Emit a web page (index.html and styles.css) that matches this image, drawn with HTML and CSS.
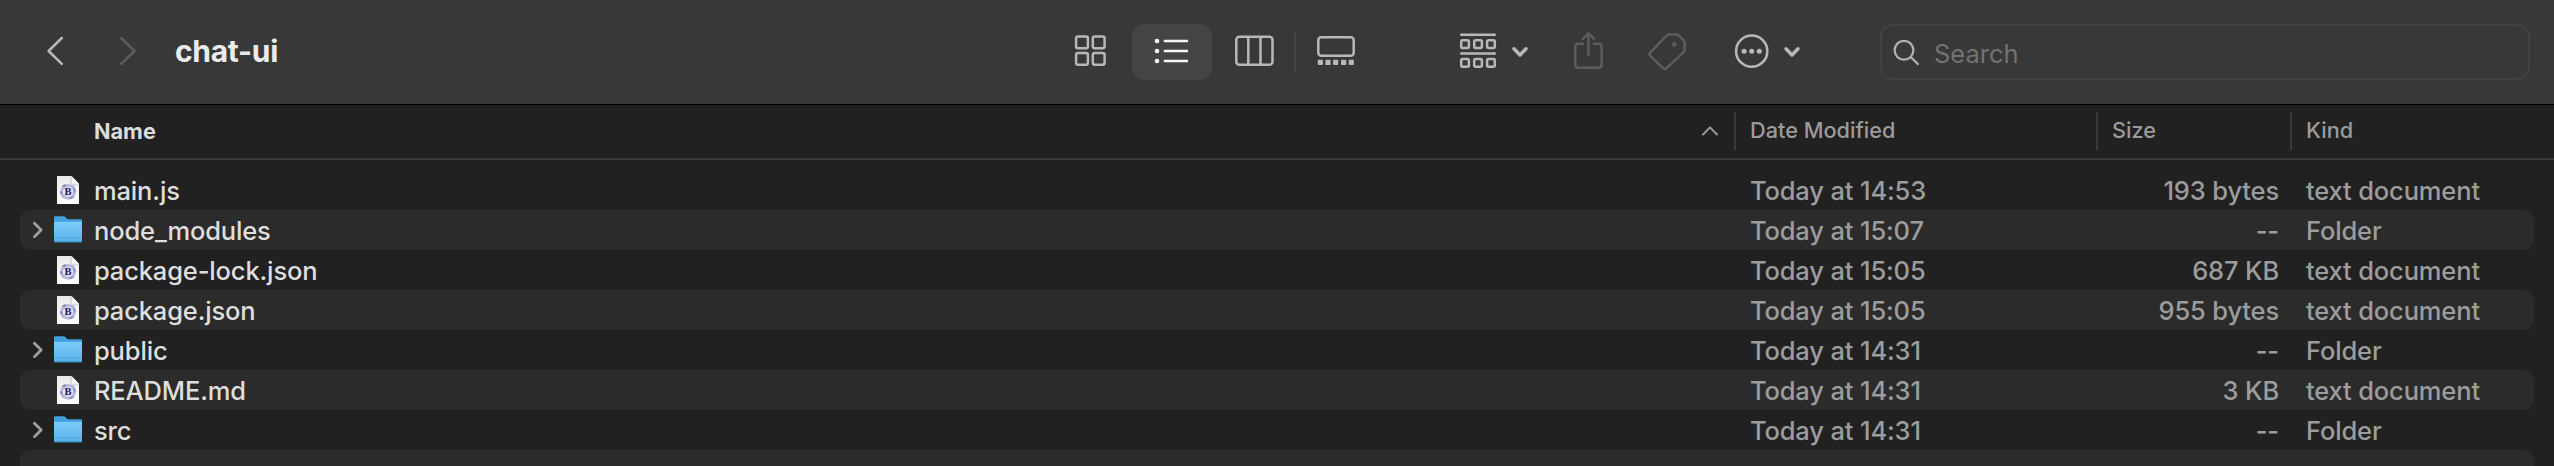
FILE: index.html
```html
<!DOCTYPE html>
<html lang="en">
<head>
<meta charset="utf-8">
<title>chat-ui</title>
<link rel="stylesheet" href="styles.css">
</head>
<body>
<svg class="defs" width="0" height="0" aria-hidden="true">
  <defs>
    <linearGradient id="folderFront" x1="0" y1="0" x2="0" y2="1"><stop offset="0" stop-color="#7accf8"/><stop offset="1" stop-color="#58b2e8"/></linearGradient>
    <linearGradient id="paper" x1="0" y1="0" x2="0" y2="1"><stop offset="0" stop-color="#e9e9e9"/><stop offset="1" stop-color="#fcfcfc"/></linearGradient>
    <symbol id="folder" viewBox="0 0 28 28">
      <path d="M0 1.2Q0 .2 1 .2H9.5Q10.7 .2 11.5 1.2L13 2.8Q13.5 3.2 14.5 3.2H27Q28 3.2 28 4.2V25H0z" fill="#459fdc"/>
      <path d="M0 6.3H28V25.3Q28 26.3 27 26.3H1Q0 26.3 0 25.3z" fill="url(#folderFront)"/>
      <path d="M0 6.3H28" stroke="#86d5fb" stroke-width=".8"/>
      <path d="M0 21.5H28" stroke="#4ba3db" stroke-width=".8"/>
      <path d="M0 25.7H28" stroke="#3f97d0" stroke-width="1"/>
    </symbol>
    <symbol id="file" viewBox="0 0 22 28">
      <path d="M0 0H14.3L22 8V28H0z" fill="url(#paper)"/>
      <path d="M13.6 0L22 8.6H13.6z" fill="#c9c9c9"/>
      <path d="M14.6 0L22 7.8H15.4Q14.6 7.8 14.6 7z" fill="#f8f8f8"/>
      <path d="M5 9.5L8.5 8.8 11 8 14 8.8 17.3 9.6 17.8 12.5 19 15.5 18 18.7 17.3 21.8 14 22.5 11 23.6 8 22.5 4.8 21.8 4.3 18.7 3 15.5 4.3 12.5z" fill="#b4b3de"/>
      <path d="M6 10L9 9M17.2 12.5L18 15.5M15.8 21.3L12.5 22.6M4.5 18.5L3.8 15.5" stroke="#7b7ab8" stroke-width="1.4"/>
      <circle cx="11" cy="15.7" r="5.3" fill="#dedef2"/>
      <text x="11.1" y="19.2" text-anchor="middle" class="file-letter">B</text>
    </symbol>
    <symbol id="disclosure" viewBox="0 0 12 18"><path d="M2.4 2.3L9.2 9 2.4 15.7" fill="none" stroke="#a0a0a0" stroke-width="2.7" stroke-linecap="round" stroke-linejoin="round"/></symbol>
    <symbol id="caret" viewBox="0 0 20 56"><path d="M4 24.8L10 31 16 24.8" fill="none" stroke="#b8b8b8" stroke-width="3.5" stroke-linecap="round" stroke-linejoin="round"/></symbol>
  </defs>
</svg>
<header class="toolbar">
  <div class="nav">
    <svg class="icon" width="44" height="56" viewBox="36 24 44 56"><path d="M61.8 38L48.6 51 61.8 63.8"/></svg>
    <svg class="icon dim" width="44" height="56" viewBox="108 24 44 56"><path d="M121.2 38L134.6 51 121.2 63.8"/></svg>
  </div>
  <h1 class="title">chat-ui</h1>
  <div class="views">
    <svg class="icon" width="80" height="56" viewBox="1052 24 80 56"><g><rect x="1076.1" y="36.5" width="11.8" height="11.8" rx="2"/><rect x="1092.8" y="36.5" width="11.8" height="11.8" rx="2"/><rect x="1076.1" y="53" width="11.8" height="11.8" rx="2"/><rect x="1092.8" y="53" width="11.8" height="11.8" rx="2"/></g></svg>
    <div class="view-active"><svg class="icon bright" width="80" height="56" viewBox="1132 24 80 56"><path d="M1164.8 41H1187M1164.8 51H1187M1164.8 61H1187"/><g class="solid"><circle cx="1157" cy="41" r="2.3"/><circle cx="1157" cy="51" r="2.3"/><circle cx="1157" cy="61" r="2.3"/></g></svg></div>
    <svg class="icon" width="82" height="56" viewBox="1212 24 82 56"><rect x="1236.3" y="36.7" width="36.2" height="28" rx="3"/><path d="M1248.3 37V64.5M1260.5 37V64.5"/></svg>
    <span class="divider"></span>
    <svg class="icon" width="80" height="56" viewBox="1296 24 80 56"><rect x="1318.3" y="37.3" width="35.4" height="18.5" rx="3"/><g class="solid"><rect x="1317.8" y="59.8" width="5.2" height="5.2" rx=".8"/><rect x="1325.4" y="59.8" width="5.2" height="5.2" rx=".8"/><rect x="1333" y="59.8" width="5.2" height="5.2" rx=".8"/><rect x="1341" y="59.8" width="5.2" height="5.2" rx=".8"/><rect x="1348.7" y="59.8" width="5.2" height="5.2" rx=".8"/></g></svg>
  </div>
  <div class="actions">
    <div class="menu"><svg class="icon" width="60" height="56" viewBox="1450 24 60 56"><path d="M1461.2 34.7H1494.8M1461.2 53.5H1494.8"/><g><rect x="1461.2" y="40.3" width="7.7" height="7.7" rx="1.5"/><rect x="1474.2" y="40.3" width="7.7" height="7.7" rx="1.5"/><rect x="1487.1" y="40.3" width="7.7" height="7.7" rx="1.5"/><rect x="1461.2" y="59.1" width="7.7" height="7.7" rx="1.5"/><rect x="1474.2" y="59.1" width="7.7" height="7.7" rx="1.5"/><rect x="1487.1" y="59.1" width="7.7" height="7.7" rx="1.5"/></g></svg><svg width="20" height="56"><use href="#caret"/></svg></div>
    <svg class="icon dim" width="54" height="56" viewBox="1562 24 54 56"><path d="M1583 43.8H1578.3Q1575.3 43.8 1575.3 46.8V64.8Q1575.3 67.8 1578.3 67.8H1598.6Q1601.6 67.8 1601.6 64.8V46.8Q1601.6 43.8 1598.6 43.8H1594M1588.5 55V33.4M1582.9 38.9L1588.5 33.3 1594.1 38.9"/></svg>
    <svg class="icon dim" width="54" height="56" viewBox="1640 24 54 56"><path d="M1669.2 34.4H1676.3Q1677.8 34.4 1679 35.6L1683.6 40.4Q1684.7 41.6 1684.7 43V49.8Q1684.7 51.2 1683.6 52.3L1666.4 68.3Q1664.7 69.7 1663 68.2L1650.2 55.8Q1648.7 54.3 1650.2 52.7L1666.8 35.4Q1667.8 34.4 1669.2 34.4z"/><circle class="hole" cx="1674.3" cy="44.4" r="2.4"/></svg>
    <div class="menu"><svg class="icon" width="52" height="56" viewBox="1730 24 52 56"><circle cx="1751.7" cy="51.2" r="15.6"/><g class="solid"><circle cx="1744.1" cy="51.2" r="2.5"/><circle cx="1751.7" cy="51.2" r="2.5"/><circle cx="1759.3" cy="51.2" r="2.5"/></g></svg><svg width="20" height="56"><use href="#caret"/></svg></div>
  </div>
  <div class="search">
    <svg class="search-icon" width="28" height="28" viewBox="1892 38 28 28"><circle cx="1904" cy="50.3" r="9.4"/><path d="M1911 57.2L1917.8 64"/></svg>
    <span class="search-text">Search</span>
  </div>
</header>
<main class="list">
  <div class="columns">
    <div class="col col-name"><b class="name-label">Name</b><svg class="sort" width="18" height="12" viewBox="0 0 18 12"><path d="M2 9.5L9 2.4 16 9.5"/></svg></div>
    <div class="col col-date"><span class="date-label">Date Modified</span></div>
    <div class="col col-size">Size</div>
    <div class="col col-kind">Kind</div>
  </div>
  <div class="rows">
    <div class="row"><span class="toggle"></span><svg class="glyph file"><use href="#file"/></svg><span class="name">main.js</span><span class="date">Today at 14:53</span><span class="size">193 bytes</span><span class="kind">text document</span></div>
    <div class="row"><svg class="toggle"><use href="#disclosure"/></svg><svg class="glyph folder"><use href="#folder"/></svg><span class="name">node_modules</span><span class="date">Today at 15:07</span><span class="size">--</span><span class="kind">Folder</span></div>
    <div class="row"><span class="toggle"></span><svg class="glyph file"><use href="#file"/></svg><span class="name">package-lock.json</span><span class="date">Today at 15:05</span><span class="size">687 KB</span><span class="kind">text document</span></div>
    <div class="row"><span class="toggle"></span><svg class="glyph file"><use href="#file"/></svg><span class="name">package.json</span><span class="date">Today at 15:05</span><span class="size">955 bytes</span><span class="kind">text document</span></div>
    <div class="row"><svg class="toggle"><use href="#disclosure"/></svg><svg class="glyph folder"><use href="#folder"/></svg><span class="name">public</span><span class="date">Today at 14:31</span><span class="size">--</span><span class="kind">Folder</span></div>
    <div class="row"><span class="toggle"></span><svg class="glyph file"><use href="#file"/></svg><span class="name">README.md</span><span class="date">Today at 14:31</span><span class="size">3 KB</span><span class="kind">text document</span></div>
    <div class="row"><svg class="toggle"><use href="#disclosure"/></svg><svg class="glyph folder"><use href="#folder"/></svg><span class="name">src</span><span class="date">Today at 14:31</span><span class="size">--</span><span class="kind">Folder</span></div>
    <div class="row partial"></div>
  </div>
</main>
</body>
</html>
```
FILE: styles.css
```css
* { box-sizing: border-box; }
body {
  margin: 0;
  height: 466px;
  overflow: hidden;
  background: #212121;
  color: #dedede;
  font-family: Inter, "Liberation Sans", sans-serif;
}
svg { display: block; flex: none; }
.defs { position: absolute; }

.toolbar {
  display: flex;
  align-items: center;
  height: 105px;
  padding: 0 24px 0 36px;
  background: #383838;
  border-bottom: 1px solid #000;
}
.icon { fill: none; stroke: #b8b8b8; stroke-width: 2.5; stroke-linecap: round; stroke-linejoin: round; }
.icon.dim { stroke: #5c5c5c; }
.icon.bright { stroke: #f5f5f5; }
.solid { fill: #b8b8b8; stroke: none; }
.bright .solid { fill: #f5f5f5; }
.hole { fill: #5c5c5c; stroke: none; }
.nav { display: flex; gap: 28px; width: 139px; }
.title { width: 877px; margin: 0; font-size: 30px; line-height: 54px; padding-bottom: 2px; font-weight: 700; letter-spacing: -0.3px; color: #ebebeb; }
.views { display: flex; align-items: center; width: 398px; }
.view-active { border-radius: 12px; background: #444; }
.divider { width: 2px; height: 40px; background: #454545; }
.actions { display: flex; width: 430px; }
.menu { display: flex; }
.actions .menu:first-child { width: 112px; }
.actions .dim + .dim { margin-left: 24px; }
.actions .menu:last-child { margin-left: 36px; }
.search {
  display: flex;
  align-items: center;
  gap: 14px;
  width: 650px;
  height: 56px;
  padding-left: 10px;
  border: 2px solid #434343;
  border-radius: 12px;
}
.search-icon { fill: none; stroke: #b0b0b0; stroke-width: 2.3; stroke-linecap: round; }
.search-text { font-size: 25.5px; line-height: 32px; padding-top: 4px; color: #727272; }

.columns {
  display: flex;
  height: 55px;
  padding-top: 7px;
  border-bottom: 2px solid #3b3b3b;
  font-size: 21.7px;
  line-height: 37px;
  font-weight: 500;
  color: #9b9b9b;
}
.col { height: 38px; }
.col + .col { border-left: 2px solid #3a3a3a; padding-left: 14px; }
.col-name { display: flex; align-items: center; justify-content: space-between; width: 1734px; padding: 0 15px 0 94px; color: #dcdcdc; }
.name-label { padding-bottom: 1px; line-height: 36px; }
.col-date { width: 362px; }
.col-size { width: 194px; }
.sort { fill: none; stroke: #9b9b9b; stroke-width: 2; stroke-linecap: round; stroke-linejoin: round; }

.rows { padding: 10px 20px 0; }
.row {
  display: grid;
  grid-template-columns: 12px 28px 1678px 362px 167px 1fr;
  align-items: center;
  height: 40px;
  padding-left: 12px;
  border-radius: 10px;
  font-size: 25.5px;
  font-weight: 500;
  letter-spacing: -0.15px;
  line-height: 38px;
  white-space: nowrap;
  color: #9c9c9c;
}
.row:nth-child(even) { background: #2b2b2b; }
.row.partial { height: 16px; border-radius: 10px 10px 0 0; }
.row span { padding-top: 2px; }
.toggle { width: 12px; height: 18px; }
.glyph { justify-self: end; }
.folder { width: 28px; height: 28px; margin-right: -10px; }
.file { width: 22px; height: 28px; margin-right: -7px; }
.row .name { padding-left: 22px; color: #dedede; }
.size { text-align: right; }
.kind { padding-left: 27px; }
.file-letter { font: bold 10.5px "Liberation Serif", serif; letter-spacing: 0; fill: #17165e; }
```
